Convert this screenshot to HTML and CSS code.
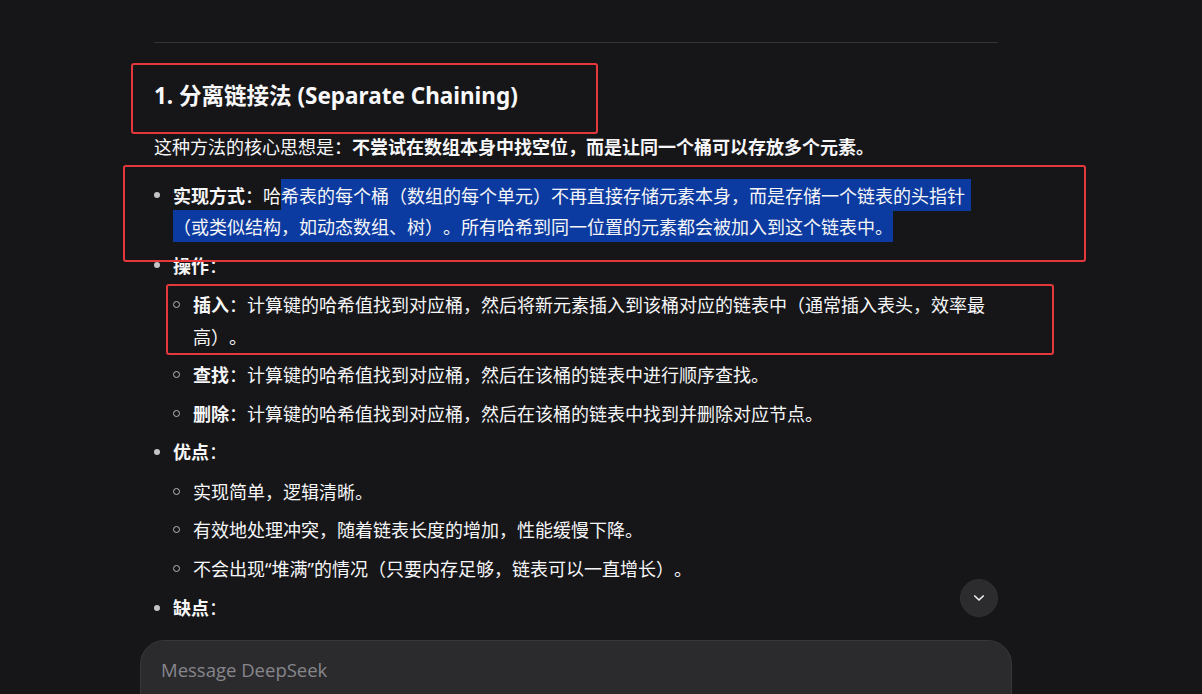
FILE: index.html
```html
<!DOCTYPE html>
<html lang="zh-CN">
<head>
<meta charset="utf-8">
<title>DeepSeek</title>
<link rel="stylesheet" href="styles.css">
</head>
<body>
<div class="chat">
  <main class="thread">
    <div class="column">
      <hr class="rule">
      <h3 class="heading">1. 分离链接法 (Separate Chaining)</h3>
      <p class="para">这种方法的核心思想是：<strong>不尝试在数组本身中找空位，而是让同一个桶可以存放多个元素。</strong></p>
      <ul class="list">
        <li><strong>实现方式</strong>：哈<span class="sel sel-first">希表的每个桶（数组的每个单元）不再直接存储元素本身，而是存储一个链表的头指针</span><span class="sel">（或类似结构，如动态数组、树）。所有哈希到同一位置的元素都会被加入到这个链表中。</span></li>
        <li><strong>操作</strong>：
          <ul class="list sub">
            <li><strong>插入</strong>：计算键的哈希值找到对应桶，然后将新元素插入到该桶对应的链表中（通常插入表头，效率最高）。</li>
            <li><strong>查找</strong>：计算键的哈希值找到对应桶，然后在该桶的链表中进行顺序查找。</li>
            <li><strong>删除</strong>：计算键的哈希值找到对应桶，然后在该桶的链表中找到并删除对应节点。</li>
          </ul>
        </li>
        <li><strong>优点</strong>：
          <ul class="list sub">
            <li>实现简单，逻辑清晰。</li>
            <li>有效地处理冲突，随着链表长度的增加，性能缓慢下降。</li>
            <li>不会出现<span class="q">“</span>堆满<span class="q">”</span>的情况（只要内存足够，链表可以一直增长）。</li>
          </ul>
        </li>
        <li><strong>缺点</strong>：</li>
      </ul>
      <button class="scroll-down" type="button" aria-label="Scroll to bottom">
        <svg width="16" height="16" viewBox="0 0 16 16" fill="none"><path d="M3.8 6 L8 10 L12.2 6" stroke="#ececee" stroke-width="1.7" stroke-linecap="round" stroke-linejoin="round"/></svg>
      </button>
    </div>
  </main>
  <div class="composer-wrap">
    <div class="composer">
      <span class="placeholder">Message DeepSeek</span>
    </div>
  </div>

  <div class="mark mark-1"></div>
  <div class="mark mark-2"></div>
  <div class="mark mark-3"></div>
</div>
</body>
</html>
```

FILE: styles.css
```css
html, body {
  margin: 0;
  padding: 0;
  background: #161618;
}

body {
  width: 1202px;
  height: 694px;
  overflow: hidden;
  font-family: "Noto Sans", "Noto Sans CJK SC", sans-serif;
  color: #f6f6f8;
  text-spacing-trim: space-all;
}

.chat {
  position: relative;
  width: 1202px;
  height: 694px;
  padding-right: 50px;
  box-sizing: border-box;
  display: flex;
  flex-direction: column;
  overflow: hidden;
}

.thread {
  height: 640px;
  flex: none;
}

.column {
  position: relative;
  width: 844px;
  height: 640px;
  margin: 0 auto;
  padding-top: 42px;
  box-sizing: border-box;
}

.rule {
  margin: 0;
  border: 0;
  border-top: 1px solid #333336;
  height: 0;
}

.heading {
  margin: 37px 0 19px;
  font-size: 22.5px;
  line-height: 32px;
  font-weight: 700;
  color: #f8f8fa;
}

.para {
  margin: 0 0 17px;
  font-family: "Noto Sans CJK SC", sans-serif;
  font-size: 18px;
  line-height: 31.5px;
  text-spacing-trim: space-all;
}

.para strong,
.list strong {
  font-weight: 700;
}

.list {
  list-style: none;
  margin: 0;
  padding: 0 0 0 19px;
  font-family: "Noto Sans CJK SC", sans-serif;
  font-size: 18px;
  line-height: 31.5px;
  text-spacing-trim: space-all;
}

.q {
  font-family: "Noto Sans", sans-serif;
}

.list li {
  position: relative;
}

.list li + li {
  margin-top: 7px;
}

.list > li::before {
  content: "";
  position: absolute;
  left: -19px;
  top: 12.75px;
  width: 6px;
  height: 6px;
  border-radius: 50%;
  background: #c4c4c8;
}

.list.sub {
  margin-top: 8px;
  padding-left: 20px;
}

.list.sub > li::before {
  left: -20px;
  top: 12px;
  width: 5px;
  height: 5px;
  background: transparent;
  border: 1.3px solid #b8b8bc;
}

.sel {
  background: #0b3ba1;
  padding: 3px 0;
}

.sel-first {
  padding-right: 6px;
}

.scroll-down {
  position: absolute;
  right: 0;
  bottom: 23px;
  width: 38px;
  height: 38px;
  border-radius: 50%;
  border: 1px solid #303033;
  background: #2c2c2f;
  display: flex;
  align-items: center;
  justify-content: center;
  padding: 0;
}

.composer-wrap {
  flex: none;
  display: flex;
  justify-content: center;
}

.composer {
  width: 872px;
  height: 120px;
  box-sizing: border-box;
  border-radius: 24px;
  background: #2b2b2e;
  border: 1px solid #37373a;
  padding: 16px 20px;
}

.placeholder {
  font-family: "Open Sans", "Noto Sans", sans-serif;
  font-size: 18.5px;
  line-height: 26px;
  color: #86868c;
}

.mark {
  position: absolute;
  border: 2px solid #e5383d;
  border-radius: 3px;
  box-sizing: border-box;
  pointer-events: none;
}

.mark-1 {
  left: 131px;
  top: 63px;
  width: 467px;
  height: 71px;
}

.mark-2 {
  left: 123px;
  top: 165px;
  width: 963px;
  height: 97px;
}

.mark-3 {
  left: 166px;
  top: 284px;
  width: 888px;
  height: 71px;
}
```
